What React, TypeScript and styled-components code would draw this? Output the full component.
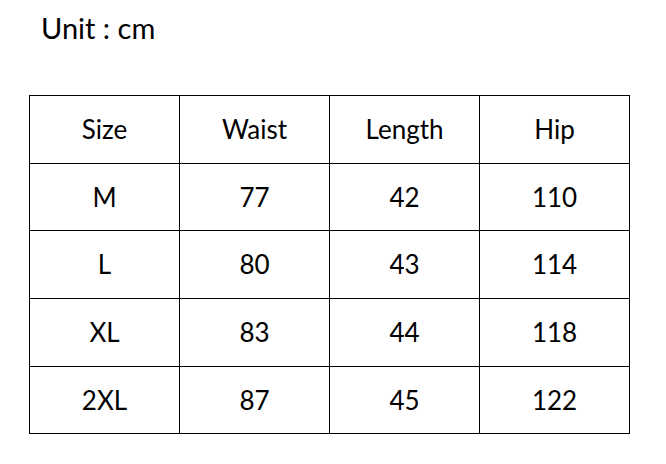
import React from 'react';
import styled, { createGlobalStyle } from 'styled-components';

const GlobalStyle = createGlobalStyle`
  html, body {
    margin: 0;
    padding: 0;
    background: #ffffff;
  }
  body {
    font-family: Lato, "Liberation Sans", sans-serif;
    color: #000000;
  }
`;

const Page = styled.div`
  width: 666px;
  height: 464px;
  padding: 10px 0 0 29px;
  box-sizing: border-box;
`;

const Title = styled.div`
  font-size: 29px;
  line-height: 36px;
  padding-left: 12px;
  height: 85px;
`;

const Grid = styled.div`
  display: grid;
  grid-template-columns: repeat(4, 149px);
  grid-template-rows: 67px 66px 67px 67px 66px;
  gap: 1px;
  padding: 1px;
  background: #000000;
  width: max-content;
`;

const Cell = styled.div`
  background: #ffffff;
  display: flex;
  align-items: center;
  justify-content: center;
  font-size: 26px;
  padding-bottom: 1px;
`;

const header = ['Size', 'Waist', 'Length', 'Hip'];

const rows = [
  ['M', '77', '42', '110'],
  ['L', '80', '43', '114'],
  ['XL', '83', '44', '118'],
  ['2XL', '87', '45', '122'],
];

const App: React.FC = () => (
  <>
    <GlobalStyle />
    <Page>
      <Title>Unit : cm</Title>
      <Grid>
        {header.map((label) => (
          <Cell key={label}>{label}</Cell>
        ))}
        {rows.map((row) =>
          row.map((value, i) => <Cell key={`${row[0]}-${i}`}>{value}</Cell>)
        )}
      </Grid>
    </Page>
  </>
);

export default App;
